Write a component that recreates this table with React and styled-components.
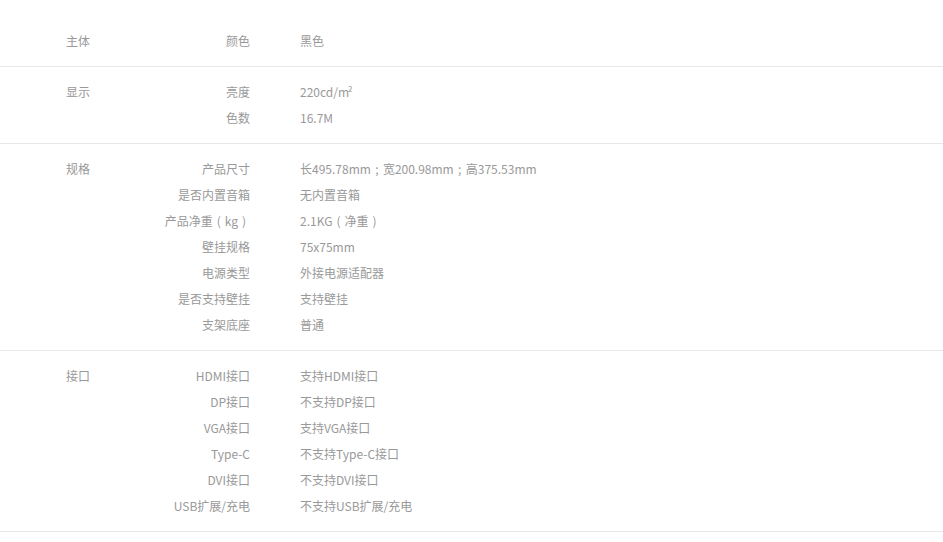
import React from "react";
import styled, { createGlobalStyle } from "styled-components";

const Global = createGlobalStyle`
  html, body { margin: 0; padding: 0; background: #fff; }
  body { font-family: "Microsoft YaHei", "Noto Sans CJK SC", "Noto Sans", sans-serif; }
`;

const Page = styled.div`
  padding-top: 16px;
`;

const Section = styled.section`
  display: flex;
  padding: 12px 0 12px 66px;
  border-bottom: 1px solid #e8e8e8;
`;

const Group = styled.div`
  width: 84px;
  flex: none;
  font-size: 12px;
  line-height: 26px;
  color: #999;
`;

const Rows = styled.dl`
  margin: 0;
  flex: 1;
`;

const Row = styled.div`
  display: flex;
  height: 26px;
  line-height: 26px;
  font-size: 12px;
  color: #999;
`;

const Key = styled.dt`
  width: 100px;
  flex: none;
  text-align: right;
  white-space: nowrap;
`;

const Value = styled.dd`
  margin: 0 0 0 50px;
  white-space: nowrap;
`;

/* full-width punctuation, drawn centred in its em box */
const Punct = styled.span`
  display: inline-block;
  width: 1em;
  text-align: center;
`;

const Sup = styled.sup`
  font-size: 8px;
  line-height: 0;
  vertical-align: 5px;
  margin-left: -1px;
`;

const fmt = (s) =>
  s.split(/([（）；])/).map((part, i) => {
    if (part === "（") return <Punct key={i}>(</Punct>;
    if (part === "）") return <Punct key={i}>)</Punct>;
    if (part === "；") return <Punct key={i}>;</Punct>;
    return part.split("²").map((p, j, arr) => (
      <React.Fragment key={i + "-" + j}>
        {p}
        {j < arr.length - 1 && <Sup>2</Sup>}
      </React.Fragment>
    ));
  });

const data = [
  { group: "主体", rows: [["颜色", "黑色"]] },
  { group: "显示", rows: [["亮度", "220cd/m²"], ["色数", "16.7M"]] },
  {
    group: "规格",
    rows: [
      ["产品尺寸", "长495.78mm；宽200.98mm；高375.53mm"],
      ["是否内置音箱", "无内置音箱"],
      ["产品净重（kg）", "2.1KG（净重）"],
      ["壁挂规格", "75x75mm"],
      ["电源类型", "外接电源适配器"],
      ["是否支持壁挂", "支持壁挂"],
      ["支架底座", "普通"],
    ],
  },
  {
    group: "接口",
    rows: [
      ["HDMI接口", "支持HDMI接口"],
      ["DP接口", "不支持DP接口"],
      ["VGA接口", "支持VGA接口"],
      ["Type-C", "不支持Type-C接口"],
      ["DVI接口", "不支持DVI接口"],
      ["USB扩展/充电", "不支持USB扩展/充电"],
    ],
  },
];

export default function App() {
  return (
    <Page>
      <Global />
      {data.map((s) => (
        <Section key={s.group}>
          <Group>{s.group}</Group>
          <Rows>
            {s.rows.map(([k, v]) => (
              <Row key={k}>
                <Key>{fmt(k)}</Key>
                <Value>{fmt(v)}</Value>
              </Row>
            ))}
          </Rows>
        </Section>
      ))}
    </Page>
  );
}
